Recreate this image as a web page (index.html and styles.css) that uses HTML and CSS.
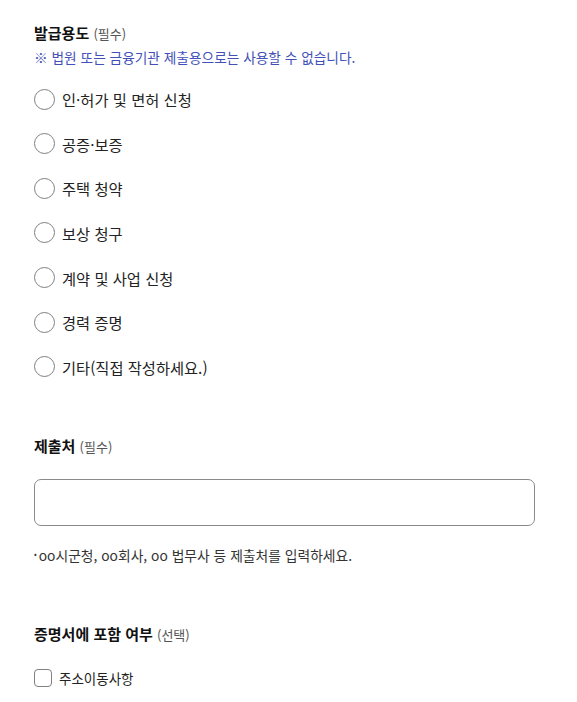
FILE: index.html
```html
<!DOCTYPE html>
<html lang="ko">
<head>
<meta charset="utf-8">
<link rel="stylesheet" href="styles.css">
</head>
<body>
<div class="form">
  <section class="group">
    <h3 class="label">발급용도 <span class="sub">(필수)</span></h3>
    <p class="notice">※ 법원 또는 금융기관 제출용으로는 사용할 수 없습니다.</p>
    <ul class="radios">
      <li class="radio"><span class="circle"></span><span>인·허가 및 면허 신청</span></li>
      <li class="radio"><span class="circle"></span><span>공증·보증</span></li>
      <li class="radio"><span class="circle"></span><span>주택 청약</span></li>
      <li class="radio"><span class="circle"></span><span>보상 청구</span></li>
      <li class="radio"><span class="circle"></span><span>계약 및 사업 신청</span></li>
      <li class="radio"><span class="circle"></span><span>경력 증명</span></li>
      <li class="radio"><span class="circle"></span><span>기타(직접 작성하세요.)</span></li>
    </ul>
  </section>
  <section class="group group-submit">
    <h3 class="label">제출처 <span class="sub">(필수)</span></h3>
    <div class="input"></div>
    <p class="hint"><span class="dot">•</span>oo시군청, oo회사, oo 법무사 등 제출처를 입력하세요.</p>
  </section>
  <section class="group group-include">
    <h3 class="label">증명서에 포함 여부 <span class="sub">(선택)</span></h3>
    <div class="check"><span class="box"></span><span>주소이동사항</span></div>
  </section>
</div>
</body>
</html>
```
FILE: styles.css
```css
* { box-sizing: border-box; }
html, body { margin: 0; padding: 0; background: #fff; }
body {
  font-family: "Noto Sans CJK KR", "Noto Sans", sans-serif;
  color: #111;
}
.form {
  padding: 22px 42px 0 34px;
}
.group { margin: 0; }
.label {
  margin: 0;
  font-size: 15px;
  line-height: 22px;
  font-weight: 700;
  color: #111;
}
.sub {
  font-size: 13px;
  font-weight: 400;
  color: #555;
}
.notice {
  margin: 2px 0 0;
  font-size: 13.7px;
  line-height: 20px;
  color: #4250b8;
}
.radios {
  list-style: none;
  margin: 21px 0 0;
  padding: 0;
  display: flex;
  flex-direction: column;
  gap: 22.67px;
}
.radio {
  display: flex;
  align-items: center;
  gap: 7px;
  height: 22px;
  font-size: 15.3px;
  color: #222;
}
.circle {
  width: 21px;
  height: 21px;
  border: 1px solid #808080;
  border-radius: 50%;
  flex: none;
}
.group-submit { margin-top: 57px; }
.input {
  margin-top: 21px;
  height: 47px;
  border: 1px solid #8a8a8a;
  border-radius: 7px;
}
.hint {
  margin: 18px 0 0;
  font-size: 13.8px;
  line-height: 20px;
  color: #333;
}
.dot { font-size: 8px; vertical-align: 4px; margin-right: 2px; }
.group-include { margin-top: 58px; }
.check {
  margin-top: 22px;
  display: flex;
  align-items: center;
  gap: 7px;
  font-size: 13.5px;
  color: #222;
}
.box {
  width: 18px;
  height: 18px;
  border: 1px solid #808080;
  border-radius: 4px;
  flex: none;
}
```
